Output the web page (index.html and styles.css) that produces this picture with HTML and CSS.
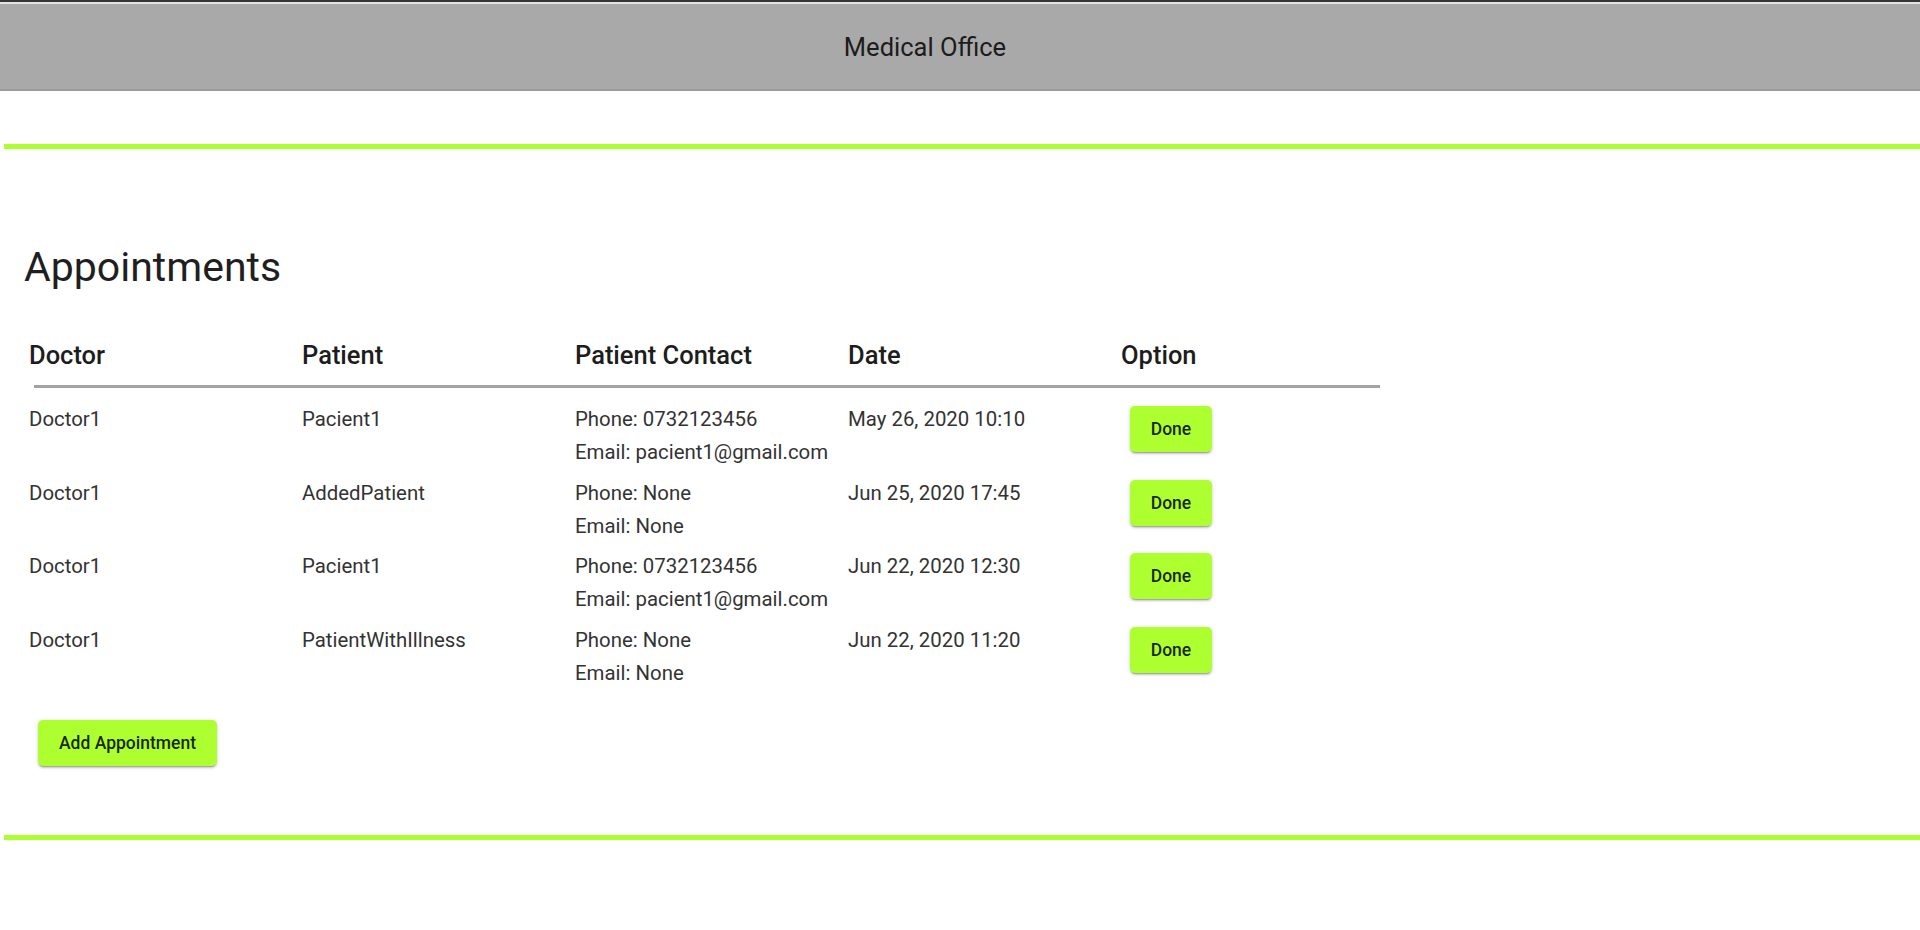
FILE: index.html
```html
<!DOCTYPE html>
<html lang="en">
<head>
<meta charset="utf-8">
<title>Medical Office</title>
<link rel="stylesheet" href="styles.css">
</head>
<body>
  <header class="topbar">
    <div class="topbar-inner">
      <span class="brand">Medical Office</span>
    </div>
  </header>
  <div class="accent-line"></div>
  <main class="content">
    <h1 class="title">Appointments</h1>
    <div class="appt-table">
      <div class="th">Doctor</div>
      <div class="th">Patient</div>
      <div class="th">Patient Contact</div>
      <div class="th">Date</div>
      <div class="th">Option</div>
      <div class="rule"></div>

      <div class="td">Doctor1</div>
      <div class="td">Pacient1</div>
      <div class="td">Phone: 0732123456<br>Email: pacient1@gmail.com</div>
      <div class="td">May 26, 2020 10:10</div>
      <div class="td"><button class="btn btn-done">Done</button></div>

      <div class="td">Doctor1</div>
      <div class="td">AddedPatient</div>
      <div class="td">Phone: None<br>Email: None</div>
      <div class="td">Jun 25, 2020 17:45</div>
      <div class="td"><button class="btn btn-done">Done</button></div>

      <div class="td">Doctor1</div>
      <div class="td">Pacient1</div>
      <div class="td">Phone: 0732123456<br>Email: pacient1@gmail.com</div>
      <div class="td">Jun 22, 2020 12:30</div>
      <div class="td"><button class="btn btn-done">Done</button></div>

      <div class="td">Doctor1</div>
      <div class="td">PatientWithIllness</div>
      <div class="td">Phone: None<br>Email: None</div>
      <div class="td">Jun 22, 2020 11:20</div>
      <div class="td"><button class="btn btn-done">Done</button></div>
    </div>
    <button class="btn btn-add">Add Appointment</button>
  </main>
  <div class="accent-line accent-bottom"></div>
</body>
</html>
```

FILE: styles.css
```css
html, body {
  margin: 0;
  padding: 0;
  background: #ffffff;
}

body {
  font-family: Roboto, "Liberation Sans", Arial, sans-serif;
  color: rgba(0, 0, 0, 0.85);
  height: 930px;
  overflow: hidden;
}

.topbar {
  border-top: 2px solid #34373a;
}

.topbar-inner {
  border-top: 2px solid #e4e4e4;
  border-bottom: 2px solid #9a9a9a;
  background: #a9a9a9;
  height: 85px;
  display: flex;
  align-items: center;
  justify-content: center;
  padding-right: 70px;
}

.brand {
  font-size: 25.5px;
  line-height: 25px;
  padding-top: 2px;
  color: #1c1c1c;
}

.accent-line {
  margin: 53px 0 0 4px;
  height: 5px;
  background: #adff2f;
}

.accent-bottom {
  margin-top: 69px;
}

.content {
  padding-top: 94px;
}

.title {
  margin: 0 0 0 24px;
  font-size: 41px;
  line-height: 48px;
  font-weight: 400;
  color: #1f1f1f;
}

.appt-table {
  margin: 49px 0 0 29px;
  display: grid;
  grid-template-columns: repeat(5, 273px);
}

.th {
  font-size: 25.5px;
  line-height: 30px;
  font-weight: 500;
  color: #1d1d1d;
  padding-bottom: 15px;
}

.rule {
  grid-column: 1 / -1;
  height: 3px;
  margin: 0 14px 7.5px 5px;
  background: #a3a3a3;
}

.td {
  font-size: 20.4px;
  line-height: 33px;
  padding-top: 7.5px;
  color: #333333;
}

.btn {
  font-family: Roboto, "Liberation Sans", Arial, sans-serif;
  font-weight: 500;
  font-size: 17.5px;
  line-height: 46px;
  height: 46px;
  padding: 0 20px;
  min-width: 80px;
  border: none;
  border-radius: 5px;
  background: #adff2f;
  color: rgba(0, 0, 0, 0.87);
  box-shadow: 0 3px 1px -2px rgba(0,0,0,.2), 0 2px 2px 0 rgba(0,0,0,.14), 0 1px 5px 0 rgba(0,0,0,.12);
  cursor: pointer;
}

.btn-done {
  margin: 3px 0 0 9px;
  width: 82px;
}

.btn-add {
  margin: 30.5px 0 0 38px;
  width: 179px;
  display: block;
}
```
